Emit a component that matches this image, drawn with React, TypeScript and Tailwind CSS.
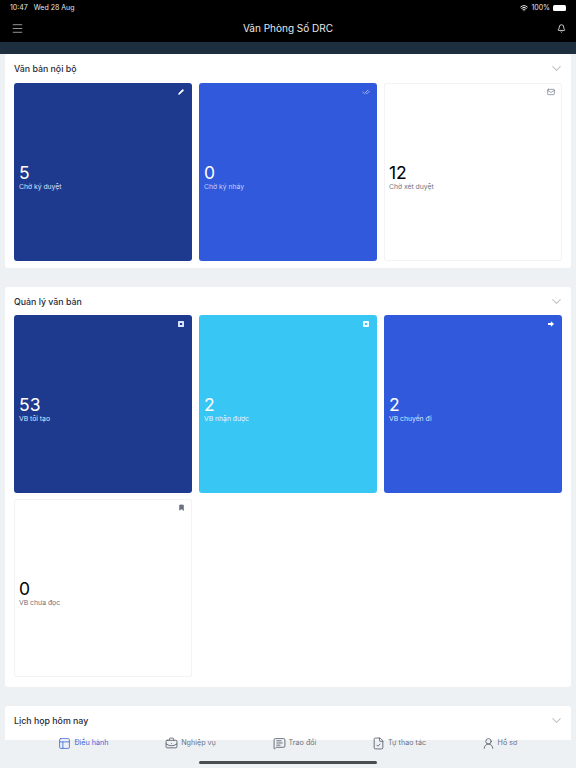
import React from "react";
import { Menu, Bell, ChevronDown, Pencil, CheckCheck, Mail, Bookmark, Wifi, PanelsTopLeft, BriefcaseBusiness, MessageSquareText, FileCheck, UserRound } from "lucide-react";

type Tile = {
  value: number;
  label: string;
  bg: string;
  ring?: string;
  valueColor: string;
  labelColor: string;
  iconColor: string;
  icon: React.ReactNode;
};

const SquareDot = () => (
  <svg viewBox="0 0 7 7" className="w-[6px] h-[6px] m-[1px]">
    <path fillRule="evenodd" fill="currentColor" d="M1 0h5a1 1 0 0 1 1 1v5a1 1 0 0 1-1 1H1a1 1 0 0 1-1-1V1a1 1 0 0 1 1-1zM2.2 2.2v2.6h2.6V2.2z" />
  </svg>
);

const BlockArrow = () => (
  <svg viewBox="0 0 7 7" className="w-[6px] h-[6px] m-[1px]">
    <path fill="currentColor" d="M0 2.2h3.4V.4L7 3.5 3.4 6.6V4.8H0z" />
  </svg>
);

const internalDocs: Tile[] = [
  { value: 5, label: "Chờ ký duyệt", bg: "bg-[#1d3a8e]", valueColor: "text-white", labelColor: "text-[#dbe4ff]", iconColor: "text-white", icon: <Pencil className="w-[6px] h-[6px] m-[1px]" fill="currentColor" strokeWidth={2} /> },
  { value: 0, label: "Chờ ký nháy", bg: "bg-[#3059dc]", valueColor: "text-white", labelColor: "text-[#c5d3fa]", iconColor: "text-[#9db4f5]", icon: <CheckCheck className="w-2 h-2" strokeWidth={3} /> },
  { value: 12, label: "Chờ xét duyệt", bg: "bg-white", ring: "ring-1 ring-inset ring-[#f1f3f5]", valueColor: "text-black", labelColor: "text-[#6b7280]", iconColor: "text-[#6b7280]", icon: <Mail className="w-2 h-2" strokeWidth={2} /> },
];

const manageDocs: Tile[] = [
  { value: 53, label: "VB tôi tạo", bg: "bg-[#1d3a8e]", valueColor: "text-white", labelColor: "text-[#dbe4ff]", iconColor: "text-[#dbe4ff]", icon: <SquareDot /> },
  { value: 2, label: "VB nhận được", bg: "bg-[#38c6f4]", valueColor: "text-white", labelColor: "text-[#e3f7fe]", iconColor: "text-[#eefaff]", icon: <SquareDot /> },
  { value: 2, label: "VB chuyển đi", bg: "bg-[#3059dc]", valueColor: "text-white", labelColor: "text-[#dbe4ff]", iconColor: "text-white", icon: <BlockArrow /> },
  { value: 0, label: "VB chưa đọc", bg: "bg-white", ring: "ring-1 ring-inset ring-[#f1f3f5]", valueColor: "text-black", labelColor: "text-[#6b7280]", iconColor: "text-[#6b7280]", icon: <Bookmark className="w-[7px] h-[7px]" fill="currentColor" /> },
];

function StatTile({ tile }: { tile: Tile }) {
  return (
    <div className={`relative h-[178px] rounded-[3px] ${tile.bg} ${tile.ring ?? ""} flex flex-col justify-center px-[5px] pt-[8px]`}>
      <div className={`absolute top-[5px] right-[7px] ${tile.iconColor}`}>{tile.icon}</div>
      <div className={`text-[17.5px] leading-[20px] mt-[2px] ${tile.valueColor}`}>{tile.value}</div>
      <div className={`text-[6.8px] leading-[9px] mt-[-1px] ${tile.labelColor}`}>{tile.label}</div>
    </div>
  );
}

function SectionHead({ title, gap }: { title: string; gap: string }) {
  return (
    <div className={`flex items-center justify-between h-[11px] ${gap}`}>
      <h2 className="text-[8.8px] font-medium text-[#1f2937] leading-[11px]">{title}</h2>
      <ChevronDown className="w-[15px] h-[15px] text-[#c0c5cb] mr-[-2px]" strokeWidth={1.75} />
    </div>
  );
}

function Section({ title, tiles, gap, bottom }: { title: string; tiles: Tile[]; gap: string; bottom: string }) {
  return (
    <section className={`bg-white rounded-[3px] px-[9px] pt-[9px] ${bottom}`}>
      <SectionHead title={title} gap={gap} />
      <div className="grid grid-cols-3 gap-x-[7px] gap-y-[6px]">
        {tiles.map((t) => (
          <StatTile key={t.label} tile={t} />
        ))}
      </div>
    </section>
  );
}

const tabs = [
  { label: "Điều hành", Icon: PanelsTopLeft, active: true, width: "w-[103px]" },
  { label: "Nghiệp vụ", Icon: BriefcaseBusiness, active: false, width: "w-[111px]" },
  { label: "Trao đổi", Icon: MessageSquareText, active: false, width: "w-[97px]" },
  { label: "Tự thao tác", Icon: FileCheck, active: false, width: "w-[112px]" },
  { label: "Hồ sơ", Icon: UserRound, active: false, width: "w-[89px]" },
];

export default function App() {
  return (
    <div className="h-[768px] w-[576px] overflow-hidden flex flex-col bg-[#eef1f4] font-['Inter',sans-serif]">
      <header className="bg-black h-[42px] shrink-0 text-white">
        <div className="h-[14px] pt-[2px] px-[10px] flex items-center justify-between text-[7px] text-[#e5e5e5]">
          <div className="flex gap-[6px]">
            <span>10:47</span>
            <span>Wed 28 Aug</span>
          </div>
          <div className="flex items-center gap-[3px]">
            <Wifi className="w-2 h-2" strokeWidth={3} />
            <span>100%</span>
            <div className="w-[13px] h-[6px] rounded-[1.5px] bg-white" />
          </div>
        </div>
        <div className="h-[28px] pl-[11px] pr-[10px] flex items-center justify-between">
          <Menu className="w-[13px] h-[13px] text-[#b5b5b5]" strokeWidth={1.5} />
          <h1 className="text-[10px] text-[#e8e8e8]">Văn Phòng Số DRC</h1>
          <Bell className="w-[9px] h-[9px] ml-[5px] text-[#d8d8d8]" strokeWidth={2.5} />
        </div>
      </header>
      <div className="h-[12px] shrink-0 bg-[#1d2f3f]" />

      <main className="flex-1 min-h-0 overflow-hidden px-[5px] flex flex-col gap-[19px]">
        <Section title="Văn bản nội bộ" tiles={internalDocs} gap="mb-[9px]" bottom="pb-[7px]" />
        <Section title="Quản lý văn bản" tiles={manageDocs} gap="mb-[8px]" bottom="pb-[10px]" />
        <section className="bg-white rounded-t-[3px] px-[9px] pt-[9px] h-[34px] shrink-0">
          <SectionHead title="Lịch họp hôm nay" gap="" />
        </section>
      </main>

      <nav className="h-[28px] shrink-0 relative flex items-start pl-[32px]">
        {tabs.map(({ label, Icon, active, width }) => (
          <div key={label} className={`flex items-center justify-center gap-[3px] h-[7px] ${width} ${active ? "text-[#3b66d8]" : "text-[#6b7280]"}`}>
            <Icon className={`w-[13px] h-[13px] shrink-0 ${active ? "" : "text-[#4b5563]"}`} strokeWidth={1.5} />
            <span className="text-[7.2px] whitespace-nowrap">{label}</span>
          </div>
        ))}
        <div className="absolute left-[199px] bottom-[4px] w-[178px] h-[3px] rounded-full bg-[#4a4d52]" />
      </nav>
    </div>
  );
}
